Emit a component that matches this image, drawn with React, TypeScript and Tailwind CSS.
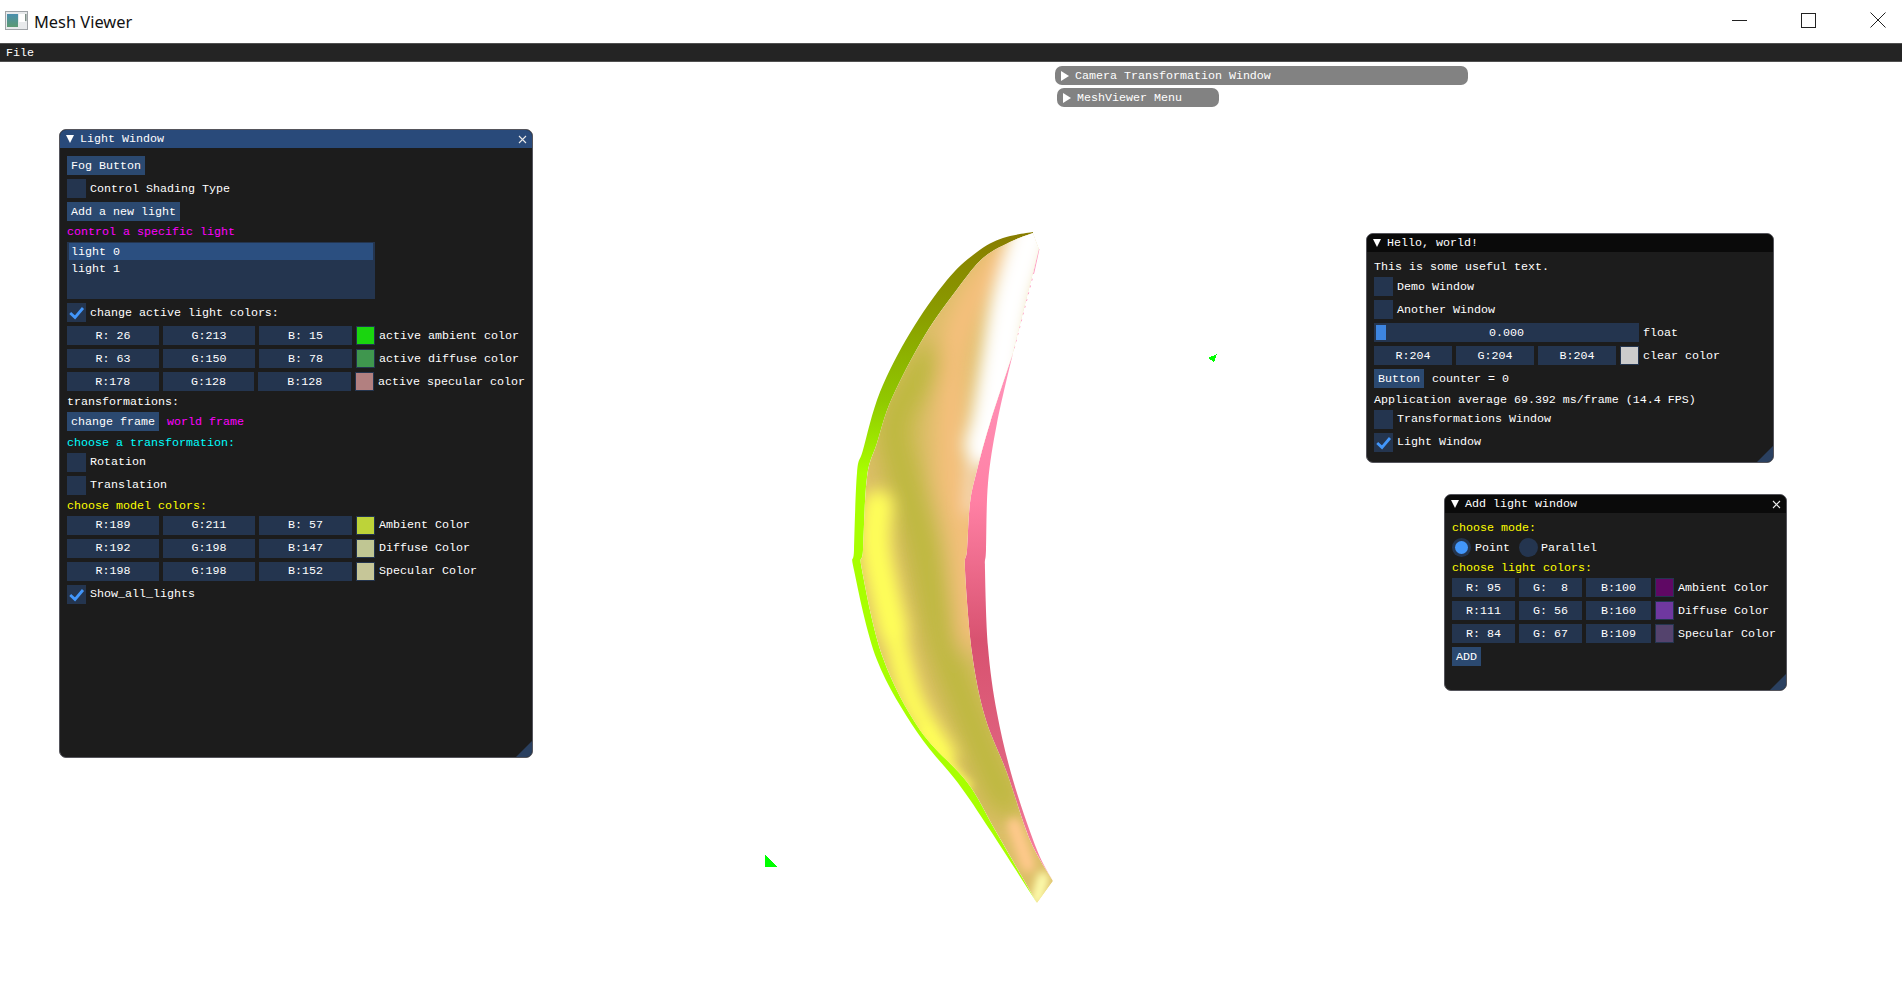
import type { ReactNode } from "react";

const FRAME = "bg-[#24354f]";

function Label({ children, className = "" }: { children: ReactNode; className?: string }) {
  return <span className={`mt-[2px] ${className}`}>{children}</span>;
}

function Check({ on, label }: { on?: boolean; label: string }) {
  return (
    <div className="flex h-[19px] items-center gap-1">
      <div className={`h-[19px] w-[19px] ${FRAME}`}>
        {on && (
          <svg width="19" height="19" viewBox="0 0 19 19">
            <path d="M3.2 10 L8 14.4 L16 5" fill="none" stroke="#4296fa" strokeWidth="2.8" />
          </svg>
        )}
      </div>
      <Label>{label}</Label>
    </div>
  );
}

function Btn({ children }: { children: ReactNode }) {
  return <div className="flex h-[19px] w-fit items-center bg-[#2b4970] px-1 pt-[2px]">{children}</div>;
}

function Line({ color, children }: { color?: string; children: ReactNode }) {
  return <div className={`h-[13px] leading-[15px] ${color ?? ""}`}>{children}</div>;
}

function ColorRow({
  values,
  swatch,
  label,
  widths,
}: {
  values: string[];
  swatch: string;
  label: string;
  widths: string[];
}) {
  return (
    <div className="flex h-[19px] items-center gap-1">
      {values.map((v, i) => (
        <div key={v + i} className={`flex h-[19px] items-center justify-center pt-[2px] ${FRAME} ${widths[i]}`}>
          {v}
        </div>
      ))}
      <div className={`h-[19px] w-[19px] border border-[#24354f] ${swatch}`} />
      <Label>{label}</Label>
    </div>
  );
}

function Win({
  title,
  className,
  titleBg,
  closable,
  children,
}: {
  title: string;
  className: string;
  titleBg: string;
  closable?: boolean;
  children: ReactNode;
}) {
  return (
    <div className={`absolute overflow-hidden rounded-[7px] border border-[#55555c] bg-[#1c1c1c] ${className}`}>
      <div className={`flex h-[18px] items-center ${titleBg}`}>
        <svg width="8" height="8" viewBox="0 0 8 8" className="ml-[6px] mr-[6px]">
          <path d="M0 0 H8 L4 8 Z" fill="#fff" />
        </svg>
        <Label>{title}</Label>
        {closable && (
          <svg width="9" height="9" viewBox="0 0 9 9" className="ml-auto mr-[5px]">
            <path d="M1 1 L8 8 M8 1 L1 8" stroke="#e8e8e8" strokeWidth="1.1" />
          </svg>
        )}
      </div>
      <div className="flex flex-col gap-1 px-[7px] pt-2">{children}</div>
      <div className="absolute bottom-0 right-0 h-[16px] w-[16px] bg-[#2a4060] [clip-path:polygon(100%_0,100%_100%,0_100%)]" />
    </div>
  );
}

function Collapsed({ title, className }: { title: string; className: string }) {
  return (
    <div className={`absolute flex h-[19px] items-center rounded-[7px] bg-[#828282] ${className}`}>
      <svg width="8" height="10" viewBox="0 0 8 10" className="ml-[6px] mr-[6px]">
        <path d="M0 0 L8 5 L0 10 Z" fill="#fff" />
      </svg>
      <Label>{title}</Label>
    </div>
  );
}

type Pt = [number, number];

// catmull-rom through the points, so the mesh outline doesn't look like a polyline
function curve(pts: Pt[], start = "M") {
  let d = `${start}${pts[0][0]},${pts[0][1]}`;
  for (let i = 0; i < pts.length - 1; i++) {
    const p0 = pts[Math.max(i - 1, 0)];
    const p1 = pts[i];
    const p2 = pts[i + 1];
    const p3 = pts[Math.min(i + 2, pts.length - 1)];
    d += ` C${p1[0] + (p2[0] - p0[0]) / 6},${p1[1] + (p2[1] - p0[1]) / 6} ${p2[0] - (p3[0] - p1[0]) / 6},${p2[1] - (p3[1] - p1[1]) / 6} ${p2[0]},${p2[1]}`;
  }
  return d;
}

const outerLeft: Pt[] = [[1033, 232], [1003, 238], [977, 252], [947, 280], [910, 333], [880, 392], [863, 450], [857, 473], [854, 550], [854, 570], [877, 660], [917, 732], [958, 783], [990, 830], [1037, 903]];
const innerLeft: Pt[] = [[1033, 233], [1010, 242], [983, 258], [958, 288], [925, 335], [892, 398], [877, 443], [867, 477], [863, 550], [862, 570], [883, 658], [920, 730], [967, 782], [995, 830], [1037, 903]];
const innerRight: Pt[] = [[1053, 881], [1030, 840], [1007, 773], [985, 717], [972, 653], [965, 570], [967, 550], [970, 503], [977, 470], [990, 423], [1013, 353]];
const outerRight: Pt[] = [[1013, 353], [997, 423], [988, 483], [986, 550], [985, 570], [988, 647], [997, 713], [1013, 780], [1037, 850], [1053, 881]];

function Mesh() {
  const body = `${curve(innerLeft)} ${curve(innerRight, "L")} L1039,249 Z`;
  const green = `${curve(outerLeft)} ${curve([...innerLeft].reverse(), "L")} Z`;
  const pink = `${curve(outerRight)} ${curve(innerRight, "L")} Z`;
  return (
    <svg className="pointer-events-none absolute left-0 top-0" width="1902" height="1006" viewBox="0 0 1902 1006">
      <defs>
        <linearGradient id="green" gradientUnits="userSpaceOnUse" x1="0" y1="232" x2="0" y2="903">
          <stop offset="0" stopColor="#887c00" />
          <stop offset="0.12" stopColor="#8a9c00" />
          <stop offset="0.25" stopColor="#90c800" />
          <stop offset="0.36" stopColor="#a8ff00" />
          <stop offset="1" stopColor="#a8ff00" />
        </linearGradient>
        <linearGradient id="pink" gradientUnits="userSpaceOnUse" x1="0" y1="249" x2="0" y2="881">
          <stop offset="0" stopColor="#ffa4cc" />
          <stop offset="0.4" stopColor="#ff80a4" />
          <stop offset="0.62" stopColor="#d85270" />
          <stop offset="0.82" stopColor="#e06480" />
          <stop offset="1" stopColor="#ff86a8" />
        </linearGradient>
        <clipPath id="bodyClip">
          <path d={body} />
        </clipPath>
        <filter id="wide" x="-50%" y="-50%" width="200%" height="200%">
          <feGaussianBlur stdDeviation="12" />
        </filter>
        <filter id="soft" x="-50%" y="-50%" width="200%" height="200%">
          <feGaussianBlur stdDeviation="8" />
        </filter>
        <filter id="softer" x="-50%" y="-50%" width="200%" height="200%">
          <feGaussianBlur stdDeviation="4" />
        </filter>
      </defs>
      <path d={green} fill="url(#green)" />
      <path d={pink} fill="url(#pink)" />
      <path d="M1039,249 L1034,272" stroke="#ff9cc4" strokeWidth="1" />
      <path d="M1034,272 L1013,353" stroke="#ff9cc4" strokeWidth="1" strokeDasharray="2 5" />
      <g clipPath="url(#bodyClip)">
        <path d={body} fill="#dcbe68" />
        <g filter="url(#wide)" fill="none" strokeLinecap="round" strokeLinejoin="round">
          <path d={curve([[930, 360], [895, 420], [905, 480], [922, 545], [942, 640], [966, 707], [992, 773], [1005, 800]])} stroke="#bcb83c" strokeWidth="34" />
          <path d={curve([[1005, 250], [972, 300], [954, 350], [952, 400], [952, 480], [965, 543], [970, 640]])} stroke="#ffc084" strokeWidth="22" />
        </g>
        <g filter="url(#soft)" fill="none" strokeLinecap="round" strokeLinejoin="round">
          <path d={curve([[972, 460], [970, 510]])} stroke="#ffe2d6" strokeWidth="10" />
          <path d={curve([[1032, 232], [1012, 300], [1002, 360], [992, 420], [985, 445]])} stroke="#ffffff" strokeWidth="42" />
          <path d={curve([[878, 505], [876, 550], [893, 630]])} stroke="#ffff58" strokeWidth="30" />
          <path d={curve([[893, 630], [912, 700], [945, 755]])} stroke="#ffff58" strokeWidth="22" />
        </g>
        <g filter="url(#softer)" fill="none" strokeLinecap="round" strokeLinejoin="round">
          <path d={curve([[925, 730], [945, 760], [968, 786]])} stroke="#ffff58" strokeWidth="8" />
          <path d={curve([[1014, 825], [1028, 865]])} stroke="#ffc98c" strokeWidth="14" />
          <path d={curve([[1043, 878], [1037, 900]])} stroke="#ffffb0" strokeWidth="12" />
        </g>
      </g>
      <g fill="#00ff00" shapeRendering="crispEdges">
        <path d="M765,855 L765,867 L777,867 Z" />
        <path d="M1208,358 L1217,354 L1214,362 Z" />
      </g>
    </svg>
  );
}

const lightW = ["w-[92px]", "w-[92px]", "w-[93px]"];
const addW = ["w-[63px]", "w-[63px]", "w-[65px]"];
const helloW = ["w-[78px]", "w-[78px]", "w-[78px]"];

export default function App() {
  return (
    <div className="relative h-screen w-full overflow-hidden whitespace-pre bg-white font-['Liberation_Mono',monospace] text-[11.67px] text-white">
      <header className="flex h-[43px] items-center text-black">
        <svg width="23" height="19" viewBox="0 0 23 19" className="ml-[5px] mt-[-3px]">
          <defs>
            <linearGradient id="ico" x1="0" y1="0" x2="0" y2="1">
              <stop offset="0" stopColor="#4a8fae" />
              <stop offset="1" stopColor="#5c9a72" />
            </linearGradient>
          </defs>
          <rect x="0.5" y="0.5" width="22" height="18" fill="#e8eaec" stroke="#a0a4a8" />
          <rect x="2" y="3" width="11" height="13" fill="url(#ico)" />
          <rect x="14" y="3" width="6" height="8" fill="#ffffff" />
          <rect x="20" y="3" width="1.5" height="7" fill="#7f9088" />
        </svg>
        <span className="ml-[6px] mt-[2px] font-['Noto_Sans',sans-serif] text-[16.4px] text-[#111]">Mesh Viewer</span>
        <div className="ml-auto mr-[16px] mt-[-3px] flex items-center gap-[54px]">
          <svg width="15" height="15" viewBox="0 0 15 15">
            <path d="M0 7.5 H15" stroke="#222" strokeWidth="1" />
          </svg>
          <svg width="15" height="15" viewBox="0 0 15 15">
            <rect x="0.5" y="0.5" width="14" height="14" fill="none" stroke="#222" />
          </svg>
          <svg width="16" height="16" viewBox="0 0 16 16">
            <path d="M0.5 0.5 L15.5 15.5 M15.5 0.5 L0.5 15.5" stroke="#222" strokeWidth="1" />
          </svg>
        </div>
      </header>
      <nav className="flex h-[19px] items-center border-y border-[#505050] bg-[#242424] pl-[6px] pt-[2px]">File</nav>

      <Mesh />

      <Collapsed title="Camera Transformation Window" className="left-[1055px] top-[66px] w-[413px]" />
      <Collapsed title="MeshViewer Menu" className="left-[1057px] top-[88px] w-[162px]" />

      <Win title="Light Window" titleBg="bg-[#294a7a]" closable className="left-[59px] top-[129px] h-[629px] w-[474px]">
        <Btn>Fog Button</Btn>
        <Check label="Control Shading Type" />
        <Btn>Add a new light</Btn>
        <Line color="text-[#ff00ff]">control a specific light</Line>
        <div className={`h-[57px] w-[308px] px-[2px] pt-px ${FRAME}`}>
          <div className="flex h-[17px] items-center bg-[#2b4f80] pl-[2px] pt-[2px]">light 0</div>
          <div className="flex h-[17px] items-center pl-[2px] pt-[2px]">light 1</div>
        </div>
        <Check on label="change active light colors:" />
        <ColorRow values={["R: 26", "G:213", "B: 15"]} swatch="bg-[#1ad50f]" label="active ambient color" widths={lightW} />
        <ColorRow values={["R: 63", "G:150", "B: 78"]} swatch="bg-[#3f964e]" label="active diffuse color" widths={lightW} />
        <ColorRow values={["R:178", "G:128", "B:128"]} swatch="bg-[#b28080]" label="active specular color" widths={lightW} />
        <Line>transformations:</Line>
        <div className="flex items-center gap-2">
          <div className="flex h-[19px] w-[92px] items-center justify-center bg-[#2b4970] pt-[2px]">change frame</div>
          <Label className="text-[#ff00ff]">world frame</Label>
        </div>
        <Line color="text-[#00ffff]">choose a transformation:</Line>
        <Check label="Rotation" />
        <Check label="Translation" />
        <Line color="text-[#ffff00]">choose model colors:</Line>
        <ColorRow values={["R:189", "G:211", "B: 57"]} swatch="bg-[#bdd339]" label="Ambient Color" widths={lightW} />
        <ColorRow values={["R:192", "G:198", "B:147"]} swatch="bg-[#c0c693]" label="Diffuse Color" widths={lightW} />
        <ColorRow values={["R:198", "G:198", "B:152"]} swatch="bg-[#c6c698]" label="Specular Color" widths={lightW} />
        <Check on label="Show_all_lights" />
      </Win>

      <Win title="Hello, world!" titleBg="bg-[#0a0a0a]" className="left-[1366px] top-[233px] h-[230px] w-[408px]">
        <Line>This is some useful text.</Line>
        <Check label="Demo Window" />
        <Check label="Another Window" />
        <div className="flex h-[19px] items-center gap-1">
          <div className={`relative flex h-[19px] w-[265px] items-center justify-center pt-[2px] ${FRAME}`}>
            <div className="absolute left-[2px] top-[2px] h-[15px] w-[10px] bg-[#3d85e0]" />
            0.000
          </div>
          <Label>float</Label>
        </div>
        <ColorRow values={["R:204", "G:204", "B:204"]} swatch="bg-[#cccccc]" label="clear color" widths={helloW} />
        <div className="flex items-center gap-2">
          <Btn>Button</Btn>
          <Label>counter = 0</Label>
        </div>
        <Line>Application average 69.392 ms/frame (14.4 FPS)</Line>
        <Check label="Transformations Window" />
        <Check on label="Light Window" />
      </Win>

      <Win title="Add light window" titleBg="bg-[#0a0a0a]" closable className="left-[1444px] top-[494px] h-[197px] w-[343px]">
        <Line color="text-[#ffff00]">choose mode:</Line>
        <div className="flex h-[19px] items-center">
          <div className={`flex h-[19px] w-[19px] items-center justify-center rounded-full ${FRAME}`}>
            <div className="h-[13px] w-[13px] rounded-full bg-[#4296fa]" />
          </div>
          <Label className="ml-1">Point</Label>
          <div className={`ml-[9px] h-[19px] w-[19px] rounded-full ${FRAME}`} />
          <Label className="ml-[3px]">Parallel</Label>
        </div>
        <Line color="text-[#ffff00]">choose light colors:</Line>
        <ColorRow values={["R: 95", "G:  8", "B:100"]} swatch="bg-[#5f0864]" label="Ambient Color" widths={addW} />
        <ColorRow values={["R:111", "G: 56", "B:160"]} swatch="bg-[#6f38a0]" label="Diffuse Color" widths={addW} />
        <ColorRow values={["R: 84", "G: 67", "B:109"]} swatch="bg-[#54436d]" label="Specular Color" widths={addW} />
        <Btn>ADD</Btn>
      </Win>
    </div>
  );
}
